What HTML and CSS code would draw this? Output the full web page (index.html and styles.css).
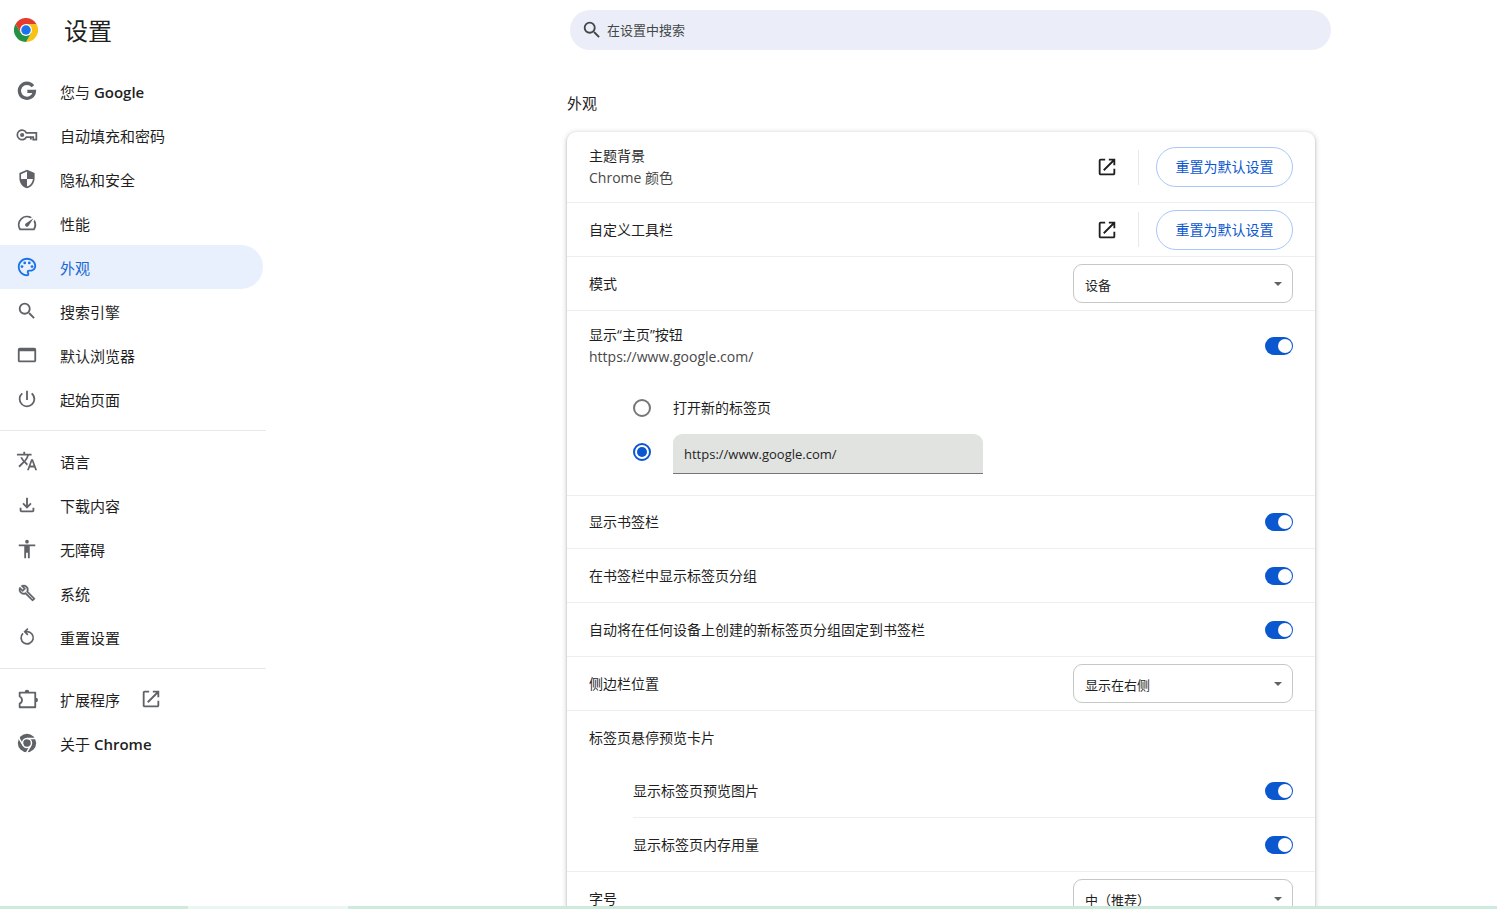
FILE: index.html
```html
<!DOCTYPE html>
<html lang="zh-CN">
<head>
<meta charset="utf-8">
<meta name="viewport" content="width=device-width, initial-scale=1">
<title>设置 - 外观</title>
<link rel="stylesheet" href="styles.css">
</head>
<body>
<svg class="defs" aria-hidden="true">
  <symbol id="open" viewBox="0 0 24 24"><path d="M19 19H5V5h5V3H5a2 2 0 0 0-2 2v14c0 1.100.9 2 2 2h14c1.100 0 2-.9 2-2v-5h-2zM14 3v2h3.590l-9.830 9.830 1.410 1.410L19 6.410V10h2V3z"/></symbol>
  <symbol id="search" viewBox="0 0 24 24"><path d="M15.500 14h-.79l-.28-.27A6.471 6.471 0 0 0 16 9.500 6.500 6.500 0 1 0 9.500 16c1.610 0 3.090-.59 4.230-1.570l.27.28v.79l5 4.990L20.490 19l-4.990-5zm-6 0C7.010 14 5 11.990 5 9.500S7.010 5 9.500 5 14 7.010 14 9.500 11.990 14 9.500 14z"/></symbol>
</svg>

<header class="header">
  <div class="brand">
    <svg class="logo" viewBox="0 0 48 48" aria-hidden="true">
      <path fill="#e33b2e" d="M24 24 3.200 12A24 24 0 0 1 44.800 12Z"/>
      <path fill="#fbc116" d="M24 12H44.800A24 24 0 0 1 24 48L34.400 30Z"/>
      <path fill="#229342" d="M3.200 12 13.600 30 34.400 30 24 48A24 24 0 0 1 3.200 12Z"/>
      <path fill="#e33b2e" d="M3.200 12 13.600 30 24 24V12Z"/>
      <circle cx="24" cy="24" r="12" fill="#fff"/>
      <circle cx="24" cy="24" r="9.500" fill="#1a73e8"/>
    </svg>
    <h1 class="title">设置</h1>
  </div>
  <label class="search">
    <svg class="icon search-icon" aria-hidden="true"><use href="#search"/></svg>
    <input class="search-input" type="search" placeholder="在设置中搜索" aria-label="在设置中搜索">
  </label>
</header>

<div class="layout">
  <nav class="sidebar" aria-label="设置">
    <a class="nav-item" href="#people">
      <svg class="icon" viewBox="0 0 24 24"><path fill="none" stroke="currentColor" stroke-width="3.600" d="M18.400 6.700A8.200 8.200 0 1 0 20.100 12.400H12.400"/></svg>
      <span class="nav-label">您与 <span class="latin">Google</span></span></a>
    <a class="nav-item" href="#autofill">
      <svg class="icon" viewBox="0 0 24 24"><path fill="none" stroke="currentColor" stroke-width="1.900" d="M11.300 9.600H22.200V17H18.800V14.200H11.300A5.200 5.200 0 1 1 11.300 9.600Z"/><circle cx="6.700" cy="12" r="2.300"/><path d="M15.200 14h2v3h-2z"/></svg>
      <span class="nav-label">自动填充和密码</span></a>
    <a class="nav-item" href="#privacy">
      <svg class="icon" viewBox="-1 -1 26 26"><path d="M12 1 3 5v6c0 5.550 3.840 10.740 9 12 5.160-1.260 9-6.450 9-12V5zm0 10.990h7c-.53 4.120-3.280 7.790-7 8.940V12H5V6.300l7-3.110z"/></svg>
      <span class="nav-label">隐私和安全</span></a>
    <a class="nav-item" href="#performance">
      <svg class="icon" viewBox="0 0 24 24"><path d="m20.380 8.570-1.230 1.850a8 8 0 0 1-.22 7.580H5.070A8 8 0 0 1 15.580 6.850l1.850-1.230A10 10 0 0 0 3.350 19a2 2 0 0 0 1.720 1h13.850a2 2 0 0 0 1.740-1 10 10 0 0 0-.27-10.440zm-9.790 6.840a2 2 0 0 0 2.830 0l5.660-8.490-8.490 5.660a2 2 0 0 0 0 2.830z"/></svg>
      <span class="nav-label">性能</span></a>
    <a class="nav-item active" href="#appearance" aria-current="page">
      <svg class="icon" viewBox="0 0 24 24"><path d="M12 22C6.490 22 2 17.510 2 12S6.490 2 12 2s10 4.040 10 9c0 3.310-2.690 6-6 6h-1.770c-.28 0-.5.22-.5.500 0 .12.050.23.130.33.410.47.640 1.060.640 1.670A2.500 2.500 0 0 1 12 22zm0-18c-4.410 0-8 3.590-8 8s3.590 8 8 8c.28 0 .5-.22.5-.5a.54.54 0 0 0-.14-.35c-.41-.46-.63-1.050-.63-1.650a2.500 2.500 0 0 1 2.500-2.500H16c2.210 0 4-1.790 4-4 0-3.860-3.590-7-8-7z"/><circle cx="6.500" cy="11.500" r="1.500"/><circle cx="9.500" cy="7.500" r="1.500"/><circle cx="14.500" cy="7.500" r="1.500"/><circle cx="17.500" cy="11.500" r="1.500"/></svg>
      <span class="nav-label">外观</span></a>
    <a class="nav-item" href="#engine">
      <svg class="icon"><use href="#search"/></svg>
      <span class="nav-label">搜索引擎</span></a>
    <a class="nav-item" href="#default-browser">
      <svg class="icon" viewBox="0 0 24 24"><path d="M20 4H4a2 2 0 0 0-2 2v12c0 1.100.9 2 2 2h16c1.100 0 2-.9 2-2V6a2 2 0 0 0-2-2zm0 14H4V8h16z"/></svg>
      <span class="nav-label">默认浏览器</span></a>
    <a class="nav-item" href="#startup">
      <svg class="icon" viewBox="0 0 24 24"><path d="M13 3h-2v10h2zm4.830 2.170-1.420 1.420A6.920 6.920 0 0 1 19 12c0 3.870-3.130 7-7 7A6.995 6.995 0 0 1 7.580 6.580L6.170 5.170A8.932 8.932 0 0 0 3 12a9 9 0 0 0 18 0c0-2.740-1.230-5.180-3.170-6.830z"/></svg>
      <span class="nav-label">起始页面</span></a>
    <hr class="nav-rule">
    <a class="nav-item" href="#languages">
      <svg class="icon" viewBox="0 0 24 24"><path d="m12.870 15.070-2.540-2.510.03-.03A17.520 17.520 0 0 0 14.070 6H17V4h-7V2H8v2H1v1.990h11.170C11.500 7.920 10.440 9.750 9 11.350 8.070 10.320 7.300 9.190 6.690 8h-2c.73 1.630 1.730 3.170 2.980 4.560l-5.090 5.020L4 19l5-5 3.110 3.110zM18.500 10h-2L12 22h2l1.120-3h4.750L21 22h2zm-2.620 7 1.620-4.330L19.120 17z"/></svg>
      <span class="nav-label">语言</span></a>
    <a class="nav-item" href="#downloads">
      <svg class="icon" viewBox="0 0 24 24"><path d="m12 16-5-5 1.400-1.450 2.600 2.600V4h2v8.150l2.600-2.600L17 11zm-6 4a2 2 0 0 1-2-2v-3h2v3h12v-3h2v3a2 2 0 0 1-2 2z"/></svg>
      <span class="nav-label">下载内容</span></a>
    <a class="nav-item" href="#accessibility">
      <svg class="icon" viewBox="0 0 24 24"><path d="M12 2a2 2 0 1 1 0 4 2 2 0 0 1 0-4zm9 7h-6v13h-2v-6h-2v6H9V9H3V7h18z"/></svg>
      <span class="nav-label">无障碍</span></a>
    <a class="nav-item" href="#system">
      <svg class="icon" viewBox="-3 -3 30 30"><path stroke="currentColor" stroke-width=".5" d="M22.610 18.990l-9.080-9.080c.93-2.340.45-5.100-1.440-7C9.790.61 6.210.4 3.660 2.260L7.500 6.110 6.080 7.520 2.250 3.690C.39 6.230.6 9.820 2.900 12.110c1.860 1.860 4.570 2.350 6.890 1.480l9.110 9.110c.39.39 1.020.39 1.410 0l2.300-2.300c.4-.38.4-1.010 0-1.410zm-3 1.600l-9.460-9.460c-.61.45-1.290.72-2 .82-1.360.2-2.790-.21-3.830-1.250C3.370 9.760 2.930 8.500 3 7.260l3.090 3.090 4.240-4.240-3.090-3.090c1.240-.07 2.490.37 3.440 1.310 1.080 1.080 1.490 2.570 1.240 3.960-.12.71-.42 1.370-.88 1.960l9.450 9.450-.88.89z"/></svg>
      <span class="nav-label">系统</span></a>
    <a class="nav-item" href="#reset">
      <svg class="icon" viewBox="-1 -1 26 26"><path fill="none" stroke="currentColor" stroke-width="2" d="M7.300 7.600A7.200 7.200 0 1 0 12 5.700H9.500M13 2 9.300 5.700 13 9.400"/></svg>
      <span class="nav-label">重置设置</span></a>
    <hr class="nav-rule">
    <a class="nav-item" href="#extensions">
      <svg class="icon" viewBox="0 0 24 24"><path fill="none" stroke="currentColor" stroke-width="2" stroke-linejoin="round" d="M4 5H21V21H4V17A4.200 4.200 0 0 0 4 9.300Z"/><path d="M9.500 4.500a2.500 2.500 0 0 1 5 0zM21.500 10.500a2.500 2.500 0 0 1 0 5z"/></svg>
      <span class="nav-label">扩展程序</span>
      <svg class="icon external"><use href="#open"/></svg></a>
    <a class="nav-item" href="#about">
      <svg class="icon" viewBox="0 0 24 24"><circle cx="12" cy="12" r="10"/><circle cx="12" cy="12" r="4.900" fill="none" stroke="#fff" stroke-width="1.600"/><path fill="none" stroke="#fff" stroke-width="1.600" d="M12 7.100H22M7.800 14.500 2.700 5.800M16.200 14.500 11.200 23"/></svg>
      <span class="nav-label">关于 <span class="latin">Chrome</span></span></a>
  </nav>

  <main class="content">
    <h2 class="section-title">外观</h2>
    <section class="card" aria-label="外观">
      <div class="row tall">
        <div class="text"><div>主题背景</div><div class="secondary">Chrome 颜色</div></div>
        <button class="icon-button" type="button" aria-label="主题背景"><svg class="icon"><use href="#open"/></svg></button>
        <span class="divider"></span>
        <button class="reset" type="button">重置为默认设置</button>
      </div>
      <div class="row">
        <div class="text">自定义工具栏</div>
        <button class="icon-button" type="button" aria-label="自定义工具栏"><svg class="icon"><use href="#open"/></svg></button>
        <span class="divider"></span>
        <button class="reset" type="button">重置为默认设置</button>
      </div>
      <div class="row">
        <label class="text" for="mode">模式</label>
        <span class="select-box"><select class="select" id="mode"><option>设备</option></select></span>
      </div>
      <div class="group">
        <div class="row tall plain">
          <label class="text" for="home"><span>显示“主页”按钮</span><span class="secondary">https://www.google.com/</span></label>
          <input class="toggle" type="checkbox" id="home" checked>
        </div>
        <div class="radios">
          <div class="radio-row">
            <input class="radio" type="radio" name="home-page" id="new-tab">
            <label for="new-tab">打开新的标签页</label>
          </div>
          <div class="radio-row">
            <input class="radio" type="radio" name="home-page" aria-label="自定义网址" checked>
            <input class="url" type="text" value="https://www.google.com/" aria-label="主页网址">
          </div>
        </div>
      </div>
      <div class="row short"><label class="text" for="t1">显示书签栏</label><input class="toggle" type="checkbox" id="t1" checked></div>
      <div class="row"><label class="text" for="t2">在书签栏中显示标签页分组</label><input class="toggle" type="checkbox" id="t2" checked></div>
      <div class="row"><label class="text" for="t3">自动将在任何设备上创建的新标签页分组固定到书签栏</label><input class="toggle" type="checkbox" id="t3" checked></div>
      <div class="row">
        <label class="text" for="side">侧边栏位置</label>
        <span class="select-box"><select class="select" id="side"><option>显示在右侧</option></select></span>
      </div>
      <div class="group">
        <div class="row short plain"><div class="text">标签页悬停预览卡片</div></div>
        <div class="nested">
          <div class="row"><label class="text" for="t4">显示标签页预览图片</label><input class="toggle" type="checkbox" id="t4" checked></div>
          <div class="row short plain"><label class="text" for="t5">显示标签页内存用量</label><input class="toggle" type="checkbox" id="t5" checked></div>
        </div>
      </div>
      <div class="row">
        <label class="text" for="size">字号</label>
        <span class="select-box"><select class="select" id="size"><option>中（推荐）</option></select></span>
      </div>
    </section>
  </main>
</div>
<div class="edge"><span class="edge-light"></span></div>
</body>
</html>
```
FILE: styles.css
```css
* { box-sizing: border-box; }

body {
  margin: 0;
  height: 100vh;
  overflow: hidden;
  background: #fff;
  color: #1f1f1f;
  font: 14px/22px "Open Sans", "Noto Sans CJK SC", sans-serif;
}

input, select, button { font: inherit; color: inherit; margin: 0; }

.defs { display: none; }

.icon {
  width: 22px;
  height: 22px;
  flex: none;
  fill: currentColor;
}

.header {
  display: grid;
  grid-template-columns: 266px 11fr minmax(0, 761px) 6fr;
  padding-top: 10px;
}

.brand {
  display: flex;
  align-items: center;
  gap: 26px;
  padding-left: 14px;
}

.logo { width: 24px; height: 24px; }

.title {
  margin: 0;
  padding-top: 2px;
  font-size: 24px;
  font-weight: 400;
  line-height: 38px;
}

.search {
  grid-column: 3;
  display: flex;
  align-items: center;
  gap: 4px;
  height: 40px;
  padding: 0 11px;
  border-radius: 20px;
  background: #ebeef8;
  color: #444746;
}

.search-input {
  flex: 1;
  min-width: 0;
  padding: 0;
  border: 0;
  outline: 0;
  background: none;
  font-size: 13px;
}

.search-input::placeholder { color: #444746; opacity: 1; }

.layout {
  display: grid;
  grid-template-columns: 266px 43fr minmax(0, 748px) 26fr;
}

.sidebar {
  padding-top: 19px;
  font-size: 15px;
}

.nav-item {
  display: flex;
  align-items: center;
  height: 44px;
  margin-right: 3px;
  padding-left: 16px;
  gap: 22px;
  border-radius: 0 22px 22px 0;
  color: #1f1f1f;
  text-decoration: none;
}

.nav-label { padding-top: 2px; }
.nav-item .icon { color: #5f6368; }
.nav-item .external { margin-left: -2px; }
.nav-item.active { background: #e8f0fe; color: #1967d2; }
.nav-item.active .icon { color: #1a73e8; }
.latin { font-weight: 600; }

.nav-rule {
  height: 1px;
  margin: 9px 0 8px;
  border: 0;
  background: #e8e8e8;
}

.content { grid-column: 3; }

.section-title {
  margin: 0;
  padding: 42px 0 18px;
  font-size: 15px;
  font-weight: 400;
  line-height: 22px;
}

.card {
  border-radius: 9px;
  background: #fff;
  box-shadow: 0 1px 2px rgba(60, 64, 67, .3), 0 1px 5px 1px rgba(60, 64, 67, .2);
}

.row {
  display: flex;
  align-items: center;
  min-height: 54px;
  padding: 0 22px;
  border-bottom: 1px solid #eee;
}

.row.tall { min-height: 71px; }
.row.short { min-height: 53px; }
.row.plain { border-bottom: 0; }
.row.tall.plain { min-height: 70px; }
.group { border-bottom: 1px solid #eee; }

.text { flex: 1; min-width: 0; }
.text > span { display: block; }
.secondary { color: #474747; }

.icon-button {
  display: flex;
  padding: 0;
  border: 0;
  background: none;
}

.divider {
  width: 1px;
  height: 35px;
  margin: 0 17px 0 20px;
  background: #e8e8e8;
}

.reset {
  min-width: 137px;
  height: 40px;
  padding: 0 17px;
  border: 1px solid #a8c7fa;
  border-radius: 20px;
  background: #fff;
  color: #0b57d0;
}

.select-box {
  display: grid;
  align-items: center;
  width: 220px;
}

.select-box::after {
  content: "";
  grid-area: 1 / 1;
  justify-self: end;
  margin-right: 11px;
  border: 4px solid transparent;
  border-top-color: #5f6368;
  border-bottom: 0;
  pointer-events: none;
}

.select {
  grid-area: 1 / 1;
  width: 100%;
  height: 39px;
  padding: 2px 30px 0 11px;
  border: 1px solid #c4c7c5;
  border-radius: 9px;
  appearance: none;
  background: #fff;
  font-size: 13px;
}

.toggle {
  display: flex;
  align-items: center;
  justify-content: flex-end;
  width: 28px;
  height: 18px;
  padding: 1px;
  border-radius: 9px;
  appearance: none;
  background: #0b57d0;
}

.toggle::before {
  content: "";
  width: 14px;
  height: 14px;
  border-radius: 50%;
  background: #fff;
}

.toggle:not(:checked) { justify-content: flex-start; background: #747775; }

.radios { padding: 5px 22px 21px 66px; }

.radio-row {
  display: flex;
  align-items: center;
  gap: 22px;
  height: 44px;
}

.radio {
  display: grid;
  place-content: center;
  width: 18px;
  height: 18px;
  border: 2px solid #747775;
  border-radius: 50%;
  appearance: none;
}

.radio:checked { border-color: #0b57d0; }

.radio:checked::before {
  content: "";
  width: 10px;
  height: 10px;
  border-radius: 50%;
  background: #0b57d0;
}

.url {
  align-self: flex-end;
  width: 310px;
  height: 40px;
  padding: 0 11px;
  border: 0;
  border-bottom: 1px solid #747775;
  border-radius: 9px 9px 0 0;
  outline: 0;
  background: #e1e3e1;
  font-size: 13px;
}

.nested { padding-left: 66px; }
.nested .row { padding-left: 0; }

.edge {
  position: fixed;
  inset: auto 0 0;
  height: 3px;
  padding-left: 188px;
  background: #ceeadb;
}

.edge-light {
  display: block;
  width: 160px;
  height: 3px;
  background: #eaf6f1;
}
```
